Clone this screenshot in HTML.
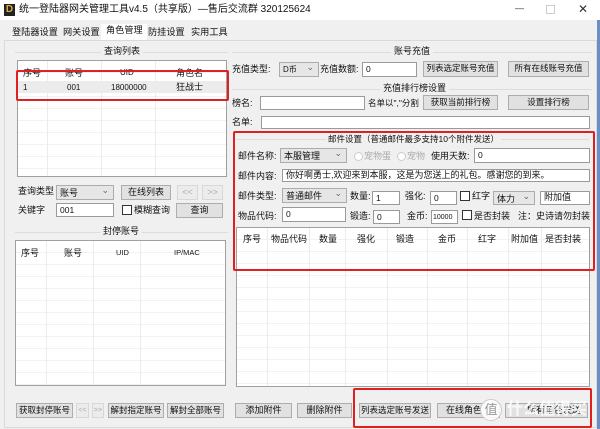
<!DOCTYPE html>
<html><head><meta charset="utf-8"><style>
*{margin:0;padding:0;box-sizing:border-box}
body{width:600px;height:429px;overflow:hidden;background:#f0f0f0;font-family:"Liberation Sans","Noto Sans CJK SC",sans-serif;font-size:9px;color:#111;position:relative}
.a{position:absolute;white-space:nowrap;line-height:1}
.in{position:absolute;background:#fff;border:1px solid #9a9a9a;font-size:8.5px;padding:2px 3px;line-height:1;white-space:nowrap;overflow:hidden}
.bt{position:absolute;background:#e1e1e1;border:1px solid #adadad;text-align:center;font-size:9px;line-height:13px;white-space:nowrap;overflow:hidden}
.dis{color:#aaa;background:#ececec;border-color:#d8d8d8}
.cb{position:absolute;background:#e6e6e6;border:1px solid #acacac;font-size:9px;padding:1px 3px;line-height:12px;white-space:nowrap}
.cb:after{content:"⌄";position:absolute;right:4px;top:-2px;color:#666;font-size:9px}
.lv{position:absolute;background:#fff;border:1px solid #a0a0a0;
background-image:repeating-linear-gradient(to bottom,transparent 0,transparent 11px,#f2f2f2 11px,#f2f2f2 12px)}
.vl{position:absolute;top:0;bottom:0;width:1px;background:#ececec}
.red{position:absolute;border:2px solid #e02020;border-radius:2px}
.chk{position:absolute;width:10px;height:10px;border:1px solid #333;background:#fff}
.rad{position:absolute;width:9px;height:9px;border:1px solid #ccc;border-radius:50%;background:#fff}
.tab{position:absolute;top:28px;font-size:9.2px;white-space:nowrap;line-height:1}
</style></head><body>
<div class="a" style="left:0;top:0;width:600px;height:20px;background:#fff;position:absolute"></div>
<div class="a" style="left:4px;top:4px;width:11px;height:12px;background:#222;color:#d8b040;font-size:10px;font-weight:bold;text-align:center;line-height:12px">D</div>
<div class="a" style="left:19px;top:5px;font-size:10px">统一登陆器网关管理工具v4.5（共享版）—售后交流群 320125624</div>
<div class="a" style="left:515px;top:4px;color:#333">—</div>
<div class="a" style="left:546px;top:5px;width:9px;height:9px;border:1px solid #ccc"></div>
<div class="a" style="left:578px;top:3px;font-size:12px;color:#333">✕</div>
<div class="a" style="left:597px;top:20px;width:3px;height:409px;background:#6a8fc8"></div>
<!-- tabs -->
<div class="a" style="left:101px;top:24px;width:46px;height:17px;background:#fff"></div>
<div class="tab" style="left:12px">登陆器设置</div>
<div class="tab" style="left:63px">网关设置</div>
<div class="tab" style="left:106px;top:26px">角色管理</div>
<div class="tab" style="left:148px">防挂设置</div>
<div class="tab" style="left:191px">实用工具</div>
<div class="a" style="left:4px;top:40px;width:593px;height:388px;border:1px solid #d9d9d9;background:#f0f0f0"></div>
<!-- left top -->
<div class="a" style="left:15px;top:52px;width:213px;height:1px;background:#dcdcdc"></div>
<div class="a" style="left:101px;top:47px;background:#f0f0f0;padding:0 3px">查询列表</div>
<div class="lv" style="left:17px;top:60px;width:210px;height:117px">
<div class="vl" style="left:29px"></div><div class="vl" style="left:83px"></div><div class="vl" style="left:137px"></div>
<div class="a" style="left:0;top:20px;width:208px;height:12px;background:#ececec"></div>
<div class="a" style="left:5px;top:8px">序号</div><div class="a" style="left:47px;top:8px">账号</div><div class="a" style="left:102px;top:8px;font-size:8px">UID</div><div class="a" style="left:158px;top:8px">角色名</div>
<div class="a" style="left:5px;top:23px;font-size:8px">1</div><div class="a" style="left:49px;top:23px;font-size:8px">001</div><div class="a" style="left:93px;top:23px;font-size:8px">18000000</div><div class="a" style="left:158px;top:22px">狂战士</div>
</div>
<div class="red" style="left:16px;top:70px;width:213px;height:31px"></div>
<div class="a" style="left:18px;top:187px">查询类型</div>
<div class="cb" style="left:56px;top:185px;width:58px;height:15px">账号</div>
<div class="bt" style="left:121px;top:185px;width:50px;height:15px">在线列表</div>
<div class="bt dis" style="left:177px;top:185px;width:21px;height:15px">&lt;&lt;</div>
<div class="bt dis" style="left:202px;top:185px;width:21px;height:15px">&gt;&gt;</div>
<div class="a" style="left:18px;top:206px">关键字</div>
<div class="in" style="left:56px;top:203px;width:58px;height:14px">001</div>
<div class="chk" style="left:122px;top:205px"></div>
<div class="a" style="left:134px;top:206px">模糊查询</div>
<div class="bt" style="left:176px;top:203px;width:47px;height:15px">查询</div>
<!-- left bottom -->
<div class="a" style="left:15px;top:232px;width:213px;height:1px;background:#dcdcdc"></div>
<div class="a" style="left:100px;top:227px;background:#f0f0f0;padding:0 3px">封停账号</div>
<div class="lv" style="left:15px;top:240px;width:211px;height:146px">
<div class="vl" style="left:30px"></div><div class="vl" style="left:77px"></div><div class="vl" style="left:124px"></div>
<div class="a" style="left:5px;top:8px">序号</div><div class="a" style="left:48px;top:8px">账号</div><div class="a" style="left:100px;top:8px;font-size:7.5px">UID</div><div class="a" style="left:158px;top:8px;font-size:7.5px">IP/MAC</div>
</div>
<div class="bt" style="left:16px;top:403px;width:57px;height:15px;font-size:8.5px">获取封停账号</div>
<div class="bt dis" style="left:76px;top:403px;width:13px;height:15px;font-size:7px">&lt;&lt;</div>
<div class="bt dis" style="left:92px;top:403px;width:12px;height:15px;font-size:7px">&gt;&gt;</div>
<div class="bt" style="left:108px;top:403px;width:56px;height:15px;font-size:8.5px">解封指定账号</div>
<div class="bt" style="left:167px;top:403px;width:57px;height:15px;font-size:8.5px">解封全部账号</div>
<!-- right -->
<div class="a" style="left:232px;top:52px;width:360px;height:1px;background:#dcdcdc"></div>
<div class="a" style="left:391px;top:47px;background:#f0f0f0;padding:0 3px">账号充值</div>
<div class="a" style="left:232px;top:65px">充值类型:</div>
<div class="cb" style="left:279px;top:62px;width:40px;height:15px;font-size:8px">D币</div>
<div class="a" style="left:320px;top:65px">充值数额:</div>
<div class="in" style="left:362px;top:62px;width:55px;height:15px">0</div>
<div class="bt" style="left:423px;top:61px;width:75px;height:16px;font-size:8.5px">列表选定账号充值</div>
<div class="bt" style="left:508px;top:61px;width:81px;height:16px;font-size:8.5px">所有在线账号充值</div>
<div class="a" style="left:232px;top:89px;width:360px;height:1px;background:#dcdcdc"></div>
<div class="a" style="left:380px;top:84px;background:#f0f0f0;padding:0 3px">充值排行榜设置</div>
<div class="a" style="left:232px;top:99px">榜名:</div>
<div class="in" style="left:260px;top:96px;width:105px;height:14px"></div>
<div class="a" style="left:368px;top:99px;font-size:8.5px">名单以","分割</div>
<div class="bt" style="left:423px;top:95px;width:75px;height:15px;font-size:8.5px">获取当前排行榜</div>
<div class="bt" style="left:508px;top:95px;width:81px;height:15px;font-size:8.5px">设置排行榜</div>
<div class="a" style="left:232px;top:118px">名单:</div>
<div class="in" style="left:261px;top:116px;width:329px;height:13px"></div>
<div class="a" style="left:236px;top:139px;width:353px;height:1px;background:#dcdcdc"></div>
<div class="a" style="left:326px;top:135px;background:#f0f0f0;padding:0 2px;font-size:8.5px">邮件设置（普通邮件最多支持10个附件发送）</div>
<div class="a" style="left:238px;top:152px">邮件名称:</div>
<div class="cb" style="left:280px;top:148px;width:67px;height:15px">本服管理</div>
<div class="rad" style="left:354px;top:152px"></div><div class="a" style="left:364px;top:152px;color:#aaa">宠物蛋</div>
<div class="rad" style="left:397px;top:152px"></div><div class="a" style="left:407px;top:152px;color:#aaa">宠物</div>
<div class="a" style="left:431px;top:152px">使用天数:</div>
<div class="in" style="left:474px;top:148px;width:116px;height:15px">0</div>
<div class="a" style="left:238px;top:172px">邮件内容:</div>
<div class="in" style="left:282px;top:169px;width:308px;height:13px;font-size:9px;padding:1px 3px">你好啊勇士,欢迎来到本服，这是为您送上的礼包。感谢您的到来。</div>
<div class="a" style="left:238px;top:192px">邮件类型:</div>
<div class="cb" style="left:282px;top:188px;width:65px;height:15px">普通邮件</div>
<div class="a" style="left:350px;top:192px">数量:</div>
<div class="in" style="left:372px;top:191px;width:28px;height:14px">1</div>
<div class="a" style="left:405px;top:192px">强化:</div>
<div class="in" style="left:430px;top:191px;width:27px;height:14px">0</div>
<div class="chk" style="left:460px;top:191px"></div><div class="a" style="left:472px;top:192px">红字</div>
<div class="cb" style="left:493px;top:191px;width:42px;height:14px">体力</div>
<div class="in" style="left:540px;top:191px;width:50px;height:14px;font-size:9px;padding:1px 3px">附加值</div>
<div class="a" style="left:238px;top:212px">物品代码:</div>
<div class="in" style="left:282px;top:207px;width:64px;height:15px">0</div>
<div class="a" style="left:350px;top:212px">锻造:</div>
<div class="in" style="left:373px;top:210px;width:27px;height:14px">0</div>
<div class="a" style="left:407px;top:212px">金币:</div>
<div class="in" style="left:431px;top:210px;width:27px;height:14px;font-size:7px;padding:3px 1px">10000</div>
<div class="chk" style="left:462px;top:210px"></div><div class="a" style="left:474px;top:212px">是否封装</div>
<div class="a" style="left:518px;top:212px">注：史诗请勿封装</div>
<div class="lv" style="left:236px;top:227px;width:354px;height:160px">
<div class="vl" style="left:30px"></div><div class="vl" style="left:72px"></div><div class="vl" style="left:108px"></div><div class="vl" style="left:150px"></div><div class="vl" style="left:190px"></div><div class="vl" style="left:230px"></div><div class="vl" style="left:271px"></div><div class="vl" style="left:304px"></div>
<div class="a" style="left:6px;top:7px">序号</div><div class="a" style="left:34px;top:7px">物品代码</div><div class="a" style="left:82px;top:7px">数量</div><div class="a" style="left:120px;top:7px">强化</div><div class="a" style="left:159px;top:7px">锻造</div><div class="a" style="left:201px;top:7px">金币</div><div class="a" style="left:241px;top:7px">红字</div><div class="a" style="left:274px;top:7px">附加值</div><div class="a" style="left:308px;top:7px">是否封装</div>
</div>
<div class="red" style="left:233px;top:131px;width:362px;height:140px"></div>
<div class="bt" style="left:235px;top:403px;width:57px;height:15px">添加附件</div>
<div class="bt" style="left:297px;top:403px;width:55px;height:15px">删除附件</div>
<div class="bt" style="left:359px;top:403px;width:72px;height:15px;font-size:8.5px">列表选定账号发送</div>
<div class="bt" style="left:437px;top:403px;width:63px;height:15px;text-align:left;padding-left:8px">在线角色</div>
<div class="bt" style="left:505px;top:403px;width:83px;height:15px;text-align:right;padding-right:6px">所有角色发送</div>
<div class="a" style="left:480px;top:399px;width:22px;height:22px;border-radius:50%;background:rgba(255,255,255,.85);border:1px solid #ccc;color:#999;font-size:13px;text-align:center;line-height:20px">值</div>
<div class="a" style="left:507px;top:402px;color:rgba(255,255,255,.85);font-size:16px;font-weight:bold">什么值得买</div>
<div class="red" style="left:353px;top:388px;width:239px;height:40px"></div>
</body></html>
